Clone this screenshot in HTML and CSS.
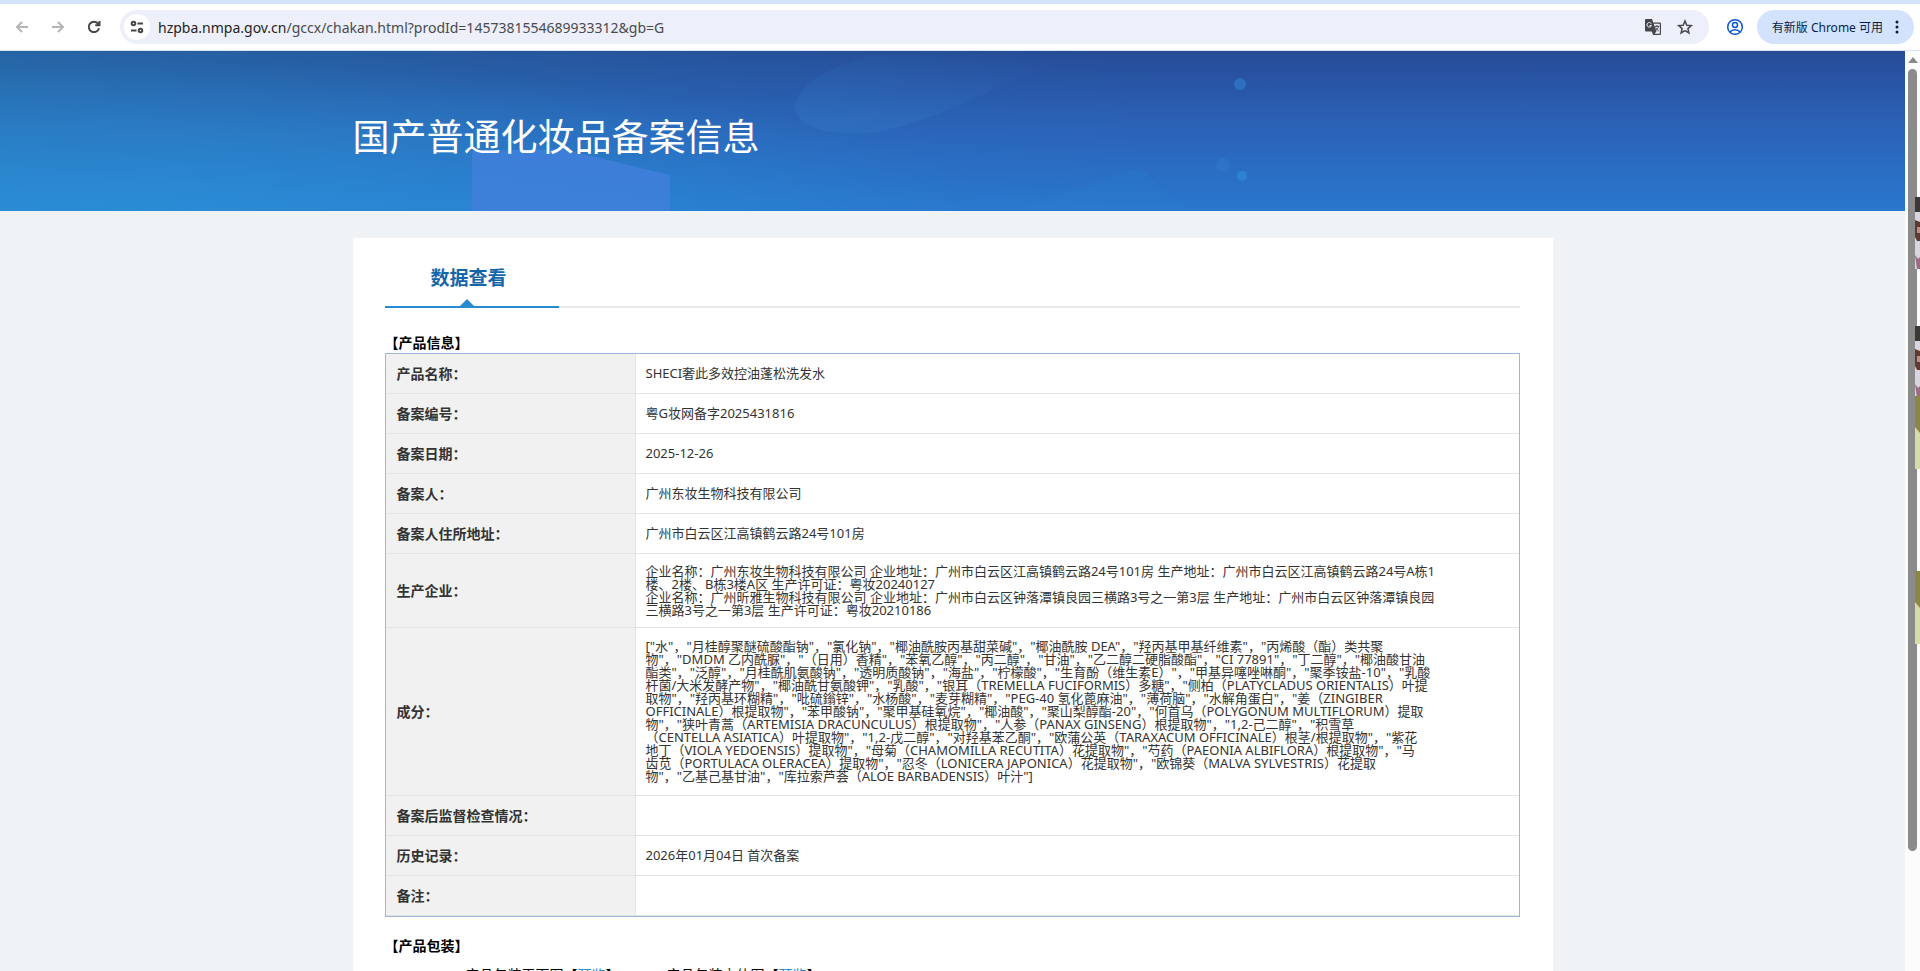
FILE: index.html
```html
<!DOCTYPE html>
<html lang="zh-CN">

<head>
  <meta charset="UTF-8">
  <meta name="viewport" content="width=device-width, initial-scale=1.0">
  <title>国产普通化妆品备案信息</title>
  <link rel="stylesheet" href="styles.css">
</head>

<body>

  <div class="toolbar">
    <nav class="nav-buttons">
      <button class="icon-btn off" aria-label="后退">
        <svg width="16" height="16" viewBox="0 0 16 16"><path d="M14 8H3M8 3L3 8l5 5" /></svg>
      </button>
      <button class="icon-btn off" aria-label="前进">
        <svg width="16" height="16" viewBox="0 0 16 16"><path d="M2 8h11M8 3l5 5-5 5" /></svg>
      </button>
      <button class="icon-btn" aria-label="重新加载">
        <svg width="16" height="16" viewBox="0 0 16 16"><path d="M13 9.200A5.200 5.200 0 1 1 12 4.600L13.500 6M13.500 2v4.200H9.300" /></svg>
      </button>
    </nav>

    <div class="address">
      <button class="site-info" aria-label="查看网站信息">
        <svg width="16" height="16" viewBox="0 0 16 16">
          <circle cx="4.500" cy="4.500" r="1.800" />
          <path d="M8.500 4.500H14M2 11.500h5.500" />
          <circle cx="11.500" cy="11.500" r="1.800" />
        </svg>
      </button>
      <div class="url" role="textbox" aria-label="地址栏" tabindex="0"><b>hzpba.nmpa.gov.cn</b>/gccx/chakan.html?prodId=1457381554689933312&amp;gb=G</div>
      <button class="icon-btn" aria-label="翻译此页">
        <svg width="18" height="18" viewBox="0 0 18 18">
          <path class="solid" d="M2 1h6l1.200 3.500H16a1 1 0 0 1 1 1V16a1 1 0 0 1-1 1H9l-1.200-3.500H2a1 1 0 0 1-1-1V2a1 1 0 0 1 1-1z" />
          <path class="paper" d="M9.700 5.700h6.100v10.100h-5.300l2-2.300z" />
          <path class="paper-line" d="M7.300 5.700A2.300 2.300 0 1 0 7.500 7.500H5.500" />
          <path class="thin" d="M10.700 8.300h4.600M13 7v1.300M14.500 8.300c-.4 2-1.500 3.300-3 4.400M11.600 9.500c.7 1.500 1.700 2.500 3.200 3.500" />
        </svg>
      </button>
      <button class="icon-btn" aria-label="为此标签页添加书签">
        <svg width="18" height="18" viewBox="0 0 18 18"><path d="M9 3l1.800 4.200 4.500.4-3.400 3 1 4.400L9 12.700 5.100 15l1-4.400-3.400-3 4.500-.4z" /></svg>
      </button>
    </div>

    <button class="icon-btn profile" aria-label="个人资料">
      <svg width="18" height="18" viewBox="0 0 18 18">
        <circle cx="9" cy="9" r="7.300" />
        <circle cx="9" cy="7" r="2.500" />
        <path d="M4 14c1.200-1.600 3-2.300 5-2.300s3.800.7 5 2.300" />
      </svg>
    </button>
    <button class="update">有新版 Chrome 可用
      <svg width="4" height="16" viewBox="0 0 4 16"><circle cx="2" cy="3" r="1.500" /><circle cx="2" cy="8" r="1.500" /><circle cx="2" cy="13" r="1.500" /></svg>
    </button>
  </div>

  <div class="window">
    <div class="page">
      <header class="banner">
        <svg class="banner-art" viewBox="0 0 1905 160" preserveAspectRatio="none">
          <defs>
            <linearGradient id="leaf" x1="0" y1="1" x2="0.8" y2="0">
              <stop offset="0" stop-color="#3a86cf" stop-opacity="0.25" />
              <stop offset="1" stop-color="#3a86cf" stop-opacity="0" />
            </linearGradient>
          </defs>
          <path fill="url(#leaf)" d="M795 55c2-18 30-38 75-50h210c-60 14-130 62-200 75-50 8-85-5-85-25z" />
          <path fill="#4180dc" fill-opacity="0.8" d="M472 160V100l90-2 108 26v36z" />
          <path fill="#2c83d3" fill-opacity="0.2" d="M1010 160l130-44 45 44z" />
          <circle fill="#2f80d0" fill-opacity="0.6" cx="1240" cy="33" r="6" />
          <circle fill="#2f80d0" fill-opacity="0.4" cx="1223" cy="114" r="7" />
          <circle fill="#2f8ad8" fill-opacity="0.7" cx="1242" cy="125" r="5" />
        </svg>
        <h1 class="container">国产普通化妆品备案信息</h1>
      </header>

      <main class="container card">
        <div class="tabs">
          <h2 class="tab">数据查看</h2>
        </div>

        <h3>【产品信息】</h3>
        <table class="info">
          <tr>
            <th scope="row">产品名称：</th>
            <td>SHECI奢此多效控油蓬松洗发水</td>
          </tr>
          <tr>
            <th scope="row">备案编号：</th>
            <td>粤G妆网备字2025431816</td>
          </tr>
          <tr>
            <th scope="row">备案日期：</th>
            <td>2025-12-26</td>
          </tr>
          <tr>
            <th scope="row">备案人：</th>
            <td>广州东妆生物科技有限公司</td>
          </tr>
          <tr>
            <th scope="row">备案人住所地址：</th>
            <td>广州市白云区江高镇鹤云路24号101房</td>
          </tr>
          <tr class="company">
            <th scope="row">生产企业：</th>
            <td>
              企业名称：广州东妆生物科技有限公司 企业地址：广州市白云区江高镇鹤云路24号101房 生产地址：广州市白云区江高镇鹤云路24号A栋1<br>
              楼、2楼、B栋3楼A区 生产许可证：粤妆20240127<br>
              企业名称：广州昕雅生物科技有限公司 企业地址：广州市白云区钟落潭镇良园三横路3号之一第3层 生产地址：广州市白云区钟落潭镇良园<br>
              三横路3号之一第3层 生产许可证：粤妆20210186
            </td>
          </tr>
          <tr class="ingredients">
            <th scope="row">成分：</th>
            <td>
              ["水"，"月桂醇聚醚硫酸酯钠"，"氯化钠"，"椰油酰胺丙基甜菜碱"，"椰油酰胺 DEA"，"羟丙基甲基纤维素"，"丙烯酸（酯）类共聚<br>
              物"，"DMDM 乙内酰脲"，"（日用）香精"，"苯氧乙醇"，"丙二醇"，"甘油"，"乙二醇二硬脂酸酯"，"CI 77891"，"丁二醇"，"椰油酸甘油<br>
              酯类"，"泛醇"，"月桂酰肌氨酸钠"，"透明质酸钠"，"海盐"，"柠檬酸"，"生育酚（维生素E）"，"甲基异噻唑啉酮"，"聚季铵盐-10"，"乳酸<br>
              杆菌/大米发酵产物"，"椰油酰甘氨酸钾"，"乳酸"，"银耳（TREMELLA FUCIFORMIS）多糖"，"侧柏（PLATYCLADUS ORIENTALIS）叶提<br>
              取物"，"羟丙基环糊精"，"吡硫鎓锌"，"水杨酸"，"麦芽糊精"，"PEG-40 氢化蓖麻油"，"薄荷脑"，"水解角蛋白"，"姜（ZINGIBER<br>
              OFFICINALE）根提取物"，"苯甲酸钠"，"聚甲基硅氧烷"，"椰油酸"，"聚山梨醇酯-20"，"何首乌（POLYGONUM MULTIFLORUM）提取<br>
              物"，"狭叶青蒿（ARTEMISIA DRACUNCULUS）根提取物"，"人参（PANAX GINSENG）根提取物"，"1,2-己二醇"，"积雪草<br>
              （CENTELLA ASIATICA）叶提取物"，"1,2-戊二醇"，"对羟基苯乙酮"，"欧蒲公英（TARAXACUM OFFICINALE）根茎/根提取物"，"紫花<br>
              地丁（VIOLA YEDOENSIS）提取物"，"母菊（CHAMOMILLA RECUTITA）花提取物"，"芍药（PAEONIA ALBIFLORA）根提取物"，"马<br>
              齿苋（PORTULACA OLERACEA）提取物"，"忍冬（LONICERA JAPONICA）花提取物"，"欧锦葵（MALVA SYLVESTRIS）花提取<br>
              物"，"乙基己基甘油"，"库拉索芦荟（ALOE BARBADENSIS）叶汁"]
            </td>
          </tr>
          <tr>
            <th scope="row">备案后监督检查情况：</th>
            <td></td>
          </tr>
          <tr>
            <th scope="row">历史记录：</th>
            <td>2026年01月04日 首次备案</td>
          </tr>
          <tr>
            <th scope="row">备注：</th>
            <td></td>
          </tr>
        </table>

        <h3>【产品包装】</h3>
        <div class="packing">
          <span>产品包装平面图【<a href="#">预览</a>】</span>
          <span>产品包装立体图【<a href="#">预览</a>】</span>
        </div>
      </main>
    </div>

    <div class="scrollbar">
      <svg width="10" height="6" viewBox="0 0 10 6"><path d="M5 0l5 6H0z" /></svg>
      <div class="thumb"></div>
      <!-- pictures peeking in from the next window -->
      <svg class="peek" width="5" height="460" viewBox="0 0 5 460">
        <g id="photo">
          <path fill="#d9d4df" d="M0 0h5v72H0z" />
          <path fill="#3b3838" d="M0 0h5v15H0z" />
          <path fill="#5d3b33" d="M0 23l5 2v19H2L0 40z" />
          <path fill="#bd8f80" d="M2 30h3v6H2z" />
          <path fill="#9c6b84" d="M0 58l3 4 2-2v12H2z" />
        </g>
        <use href="#photo" y="129" />
        <g id="field">
          <path fill="#8a8747" d="M0 199h5v73H0z" />
          <path fill="#d8dba6" d="M0 230l5 6v36H0z" />
        </g>
        <use href="#field" y="175" />
      </svg>
    </div>
  </div>

</body>

</html>
```
FILE: styles.css
```css
* {
  margin: 0;
  padding: 0;
  box-sizing: border-box;
}

body {
  display: flex;
  flex-direction: column;
  height: 100vh;
  overflow: hidden;
  background-color: #fff;
  color: #333;
  font-family: "Noto Sans", "Noto Sans CJK SC", sans-serif;
  font-size: 13px;
}

button {
  border: none;
  background: none;
  font: inherit;
  cursor: pointer;
}

/* browser bar */
.toolbar {
  display: flex;
  align-items: center;
  flex: none;
  height: 51px;
  padding: 0 6px 0 10px;
  border-top: 4px solid #d3e3fd;
  border-bottom: 1px solid #d9e2f1;
}

.nav-buttons {
  display: flex;
  gap: 12px;
  margin-right: 14px;
}

.icon-btn {
  display: grid;
  place-content: center;
  width: 24px;
  height: 24px;
}

.toolbar svg {
  fill: none;
  stroke: #45474a;
  stroke-width: 2;
}

.toolbar .off svg {
  stroke: #b4b5b7;
}

.address {
  display: flex;
  align-items: center;
  flex: 1;
  height: 34px;
  padding: 0 12px 0 4px;
  gap: 8px;
  border-radius: 17px;
  background-color: #edf0fa;
}

.site-info {
  display: grid;
  place-content: center;
  width: 26px;
  height: 26px;
  border-radius: 50%;
  background-color: #fff;
}

.url {
  flex: 1;
  color: #474a4f;
  font-size: 14px;
}

.url b {
  color: #1f1f1f;
  font-weight: normal;
}

.toolbar .address .icon-btn svg {
  stroke-width: 1.5;
}

.toolbar svg .solid {
  fill: #45474a;
  stroke: none;
}

.toolbar svg .paper {
  fill: #edf0fa;
  stroke: none;
}

.toolbar svg .paper-line {
  stroke: #edf0fa;
  stroke-width: 1;
}

.toolbar svg .thin {
  stroke-width: 1;
}

.profile {
  margin: 0 10px 0 14px;
}

.toolbar .profile svg {
  stroke: #0b57d0;
  stroke-width: 1.5;
}

.update {
  display: flex;
  align-items: center;
  gap: 12px;
  height: 34px;
  padding: 0 15px;
  border-radius: 17px;
  background-color: #d3e3fd;
  color: #041e49;
  font-size: 12px;
}

.toolbar .update svg {
  fill: #041e49;
  stroke: none;
}

/* page and its scrollbar */
.window {
  display: flex;
  flex: 1;
  min-height: 0;
}

.page {
  flex: 1;
  overflow: hidden;
  background-color: #eff3f6;
}

.container {
  width: 1200px;
  max-width: 100%;
  margin: 0 auto;
}

.banner {
  position: relative;
  height: 160px;
  padding-top: 60px;
  background:
    radial-gradient(ellipse 900px 150px at 5% 100%, rgba(44, 148, 222, 0.6), rgba(38, 140, 210, 0)),
    linear-gradient(to right, rgba(38, 140, 190, 0.4), rgba(38, 120, 200, 0.15) 40%, rgba(42, 90, 190, 0.1) 60%),
    linear-gradient(#264a93, #2b62b5 45%, #297bd0);
}

.banner-art {
  position: absolute;
  inset: 0;
  width: 100%;
  height: 100%;
}

.banner h1 {
  position: relative;
  color: #fff;
  font-size: 37px;
  font-weight: normal;
  line-height: 52px;
}

.card {
  margin-top: 27px;
  padding: 20px 33px 60px 32px;
  background-color: #fff;
}

.tabs {
  display: flex;
  margin-bottom: 26px;
  border-bottom: 2px solid #e6e8ea;
}

.tab {
  position: relative;
  width: 174px;
  height: 50px;
  margin-bottom: -2px;
  padding-left: 46px;
  border-bottom: 2px solid #268ccf;
  color: #1466a8;
  font-size: 19px;
  line-height: 40px;
}

.tab::after {
  content: "";
  position: absolute;
  bottom: 0;
  left: 75px;
  border: 7px solid transparent;
  border-top: none;
  border-bottom-color: #268ccf;
}

h3 {
  color: #000;
  font-size: 14px;
  line-height: 18px;
}

.info {
  width: 100%;
  margin-top: 1px;
  border: 1px solid #9bb8dc;
  border-spacing: 0;
}

.info tr {
  height: 40px;
}

.info .company {
  height: 74px;
}

.info .ingredients {
  height: 168px;
}

.info th {
  width: 250px;
  padding-left: 11px;
  border-right: 1px solid #e3e3e3;
  border-bottom: 1px solid #e3e3e3;
  background-color: #f1f1f1;
  font-size: 14px;
  line-height: 18px;
  text-align: left;
}

.info td {
  padding-left: 10px;
  border-bottom: 1px solid #e3e3e3;
  line-height: 13px;
  white-space: nowrap;
}

.info + h3 {
  margin-top: 20px;
}

.packing {
  display: flex;
  gap: 47px;
  margin-top: 10px;
  padding-left: 81px;
  color: #000;
  font-size: 14px;
  line-height: 20px;
}

.packing a {
  color: #268ccf;
  text-decoration: none;
}

.scrollbar {
  position: relative;
  display: flex;
  flex-direction: column;
  gap: 6px;
  width: 15px;
  padding: 6px 3px 120px;
  background-color: #fcfcfc;
}

.scrollbar svg {
  flex: none;
  fill: #8b8b8b;
}

.thumb {
  flex: 1;
  width: 9px;
  border-radius: 5px;
  background-color: #8b8b8b;
}

.scrollbar .peek {
  position: absolute;
  top: 146px;
  right: 0;
}
```
